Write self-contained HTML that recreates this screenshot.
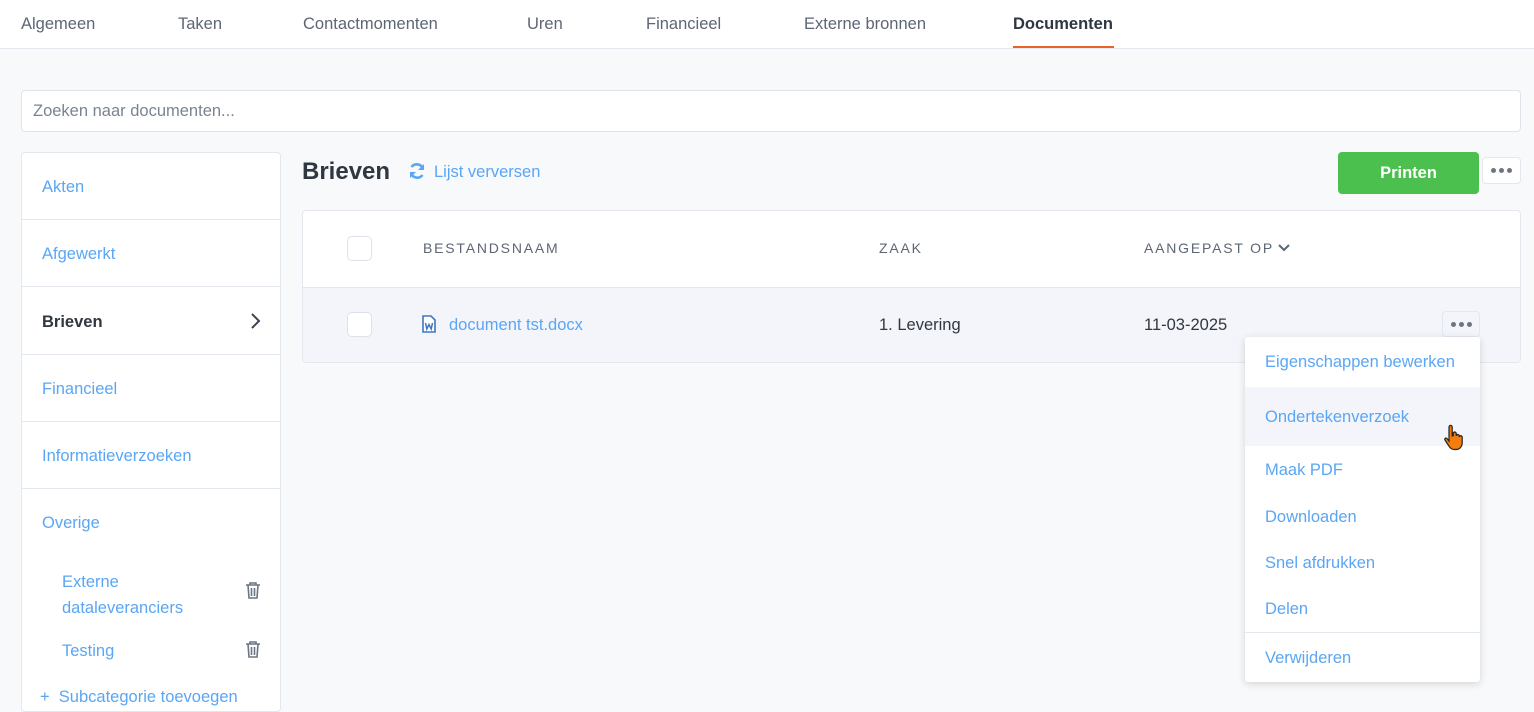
<!DOCTYPE html>
<html><head><meta charset="utf-8"><style>
*{box-sizing:border-box;margin:0;padding:0}
body{width:1534px;height:699px;overflow:hidden;background:#f8f9fb;font-family:"Liberation Sans",sans-serif;position:relative;color:#3a4350}
.a{position:absolute;white-space:nowrap}
.tabs{position:absolute;left:0;top:0;width:1534px;height:49px;background:#fff;border-bottom:1px solid #e4e7ee}
.tab{position:absolute;top:15px;font-size:16.5px;color:#5d6673}
.blue{color:#5aa6f5}
.side{position:absolute;left:21px;top:152px;width:260px;height:560px;background:#fff;border:1px solid #e4e7ee;border-radius:4px}
.si{position:absolute;left:20px;font-size:16.5px;color:#5aa6f5}
.hr{position:absolute;left:0;right:0;height:1px;background:#e4e7ee}
.cb{position:absolute;width:25px;height:25px;border:1px solid #dde1ea;border-radius:5px;background:#fff}
.th{position:absolute;top:240px;font-size:14px;letter-spacing:1.8px;color:#5d6673}
.mi{position:absolute;left:20px;font-size:16.5px;color:#5aa6f5}
.dots{position:absolute;display:flex;gap:3px;justify-content:center;align-items:center}
.dots i{width:5px;height:5px;border-radius:50%;background:#6b7583;display:block}
</style></head><body>
<div class="tabs">
<div class="tab" style="left:21px">Algemeen</div>
<div class="tab" style="left:178px">Taken</div>
<div class="tab" style="left:303px">Contactmomenten</div>
<div class="tab" style="left:527px">Uren</div>
<div class="tab" style="left:646px">Financieel</div>
<div class="tab" style="left:804px">Externe bronnen</div>
<div class="tab" style="left:1013px;font-weight:bold;color:#2f3740">Documenten</div>
<div class="a" style="left:1013px;top:46px;width:101px;height:2px;background:#e8632b"></div>
</div>
<div class="a" style="left:21px;top:90px;width:1500px;height:42px;background:#fff;border:1px solid #dfe3ea;border-radius:4px;font-size:16.5px;color:#7a8491;padding:11px 11px">Zoeken naar documenten...</div>

<div class="side">
<div class="si" style="top:25px">Akten</div><div class="hr" style="top:66px"></div>
<div class="si" style="top:92px">Afgewerkt</div><div class="hr" style="top:133px"></div>
<div class="si" style="top:160px;color:#2f3740;font-weight:bold">Brieven</div>
<svg class="a" style="left:227px;top:159px" width="12" height="18" viewBox="0 0 12 18"><path d="M3 2l7 7-7 7" fill="none" stroke="#3a4350" stroke-width="2"/></svg>
<div class="hr" style="top:201px"></div>
<div class="si" style="top:227px">Financieel</div><div class="hr" style="top:268px"></div>
<div class="si" style="top:294px">Informatieverzoeken</div><div class="hr" style="top:335px"></div>
<div class="si" style="top:361px">Overige</div>
<div class="si" style="left:40px;top:416px;line-height:26px;white-space:normal">Externe<br>dataleveranciers</div>
<div class="si" style="left:40px;top:489px">Testing</div>
<div class="si" style="left:18px;top:535px">+ &nbsp;Subcategorie toevoegen</div>
</div>
<svg class="a" style="left:245px;top:581px" width="16" height="19" viewBox="0 0 16 19"><path d="M1 4h14M5 4V2h6v2M3 4l1 13h8l1-13M6.5 7v8M9.5 7v8" fill="none" stroke="#6b7583" stroke-width="1.6"/></svg>
<svg class="a" style="left:245px;top:640px" width="16" height="19" viewBox="0 0 16 19"><path d="M1 4h14M5 4V2h6v2M3 4l1 13h8l1-13M6.5 7v8M9.5 7v8" fill="none" stroke="#6b7583" stroke-width="1.6"/></svg>

<div class="a" style="left:302px;top:158px;font-size:24px;font-weight:bold;color:#2f3740">Brieven</div>
<svg class="a" style="left:408px;top:162px" width="18" height="18" viewBox="0 0 18 18"><path d="M15 7A6.5 6.5 0 0 0 3.5 5M3 11a6.5 6.5 0 0 0 11.5 2" fill="none" stroke="#5aa6f5" stroke-width="2.6"/><path d="M16 2v6h-6zM2 16v-6h6z" fill="#5aa6f5"/></svg>
<div class="a blue" style="left:434px;top:163px;font-size:16.5px">Lijst verversen</div>
<div class="a" style="left:1338px;top:152px;width:141px;height:42px;background:#4bc04f;border-radius:4px;color:#fff;font-weight:bold;font-size:16.5px;text-align:center;line-height:42px">Printen</div>
<div class="dots" style="left:1482px;top:157px;width:39px;height:27px;background:#fff;border:1px solid #e4e7ee;border-radius:4px"><i></i><i></i><i></i></div>

<div class="a" style="left:302px;top:210px;width:1219px;height:153px;background:#fff;border:1px solid #e4e7ee;border-radius:4px;overflow:hidden">
<div class="a" style="left:0;top:76px;width:100%;height:77px;background:#f3f5fa;border-top:1px solid #e4e7ee"></div>
</div>
<div class="cb" style="left:347px;top:236px"></div>
<div class="cb" style="left:347px;top:312px"></div>
<div class="th" style="left:423px">BESTANDSNAAM</div>
<div class="th" style="left:879px">ZAAK</div>
<div class="th" style="left:1144px">AANGEPAST OP</div>
<svg class="a" style="left:1277px;top:243px" width="14" height="10" viewBox="0 0 14 10"><path d="M2 2l5 5 5-5" fill="none" stroke="#5d6673" stroke-width="2"/></svg>
<svg class="a" style="left:422px;top:315px" width="14" height="18" viewBox="0 0 14 18"><path d="M1 1h8l4 4v12H1z" fill="#fff" stroke="#3e76c2" stroke-width="1.6"/><path d="M3.5 8l1.3 6 2.2-4.5 2.2 4.5 1.3-6" fill="none" stroke="#3e76c2" stroke-width="1.5"/></svg>
<div class="a blue" style="left:449px;top:316px;font-size:16.5px">document tst.docx</div>
<div class="a" style="left:879px;top:316px;font-size:16.5px;color:#2f3740">1. Levering</div>
<div class="a" style="left:1144px;top:316px;font-size:16.5px;color:#2f3740">11-03-2025</div>
<div class="dots" style="left:1442px;top:311px;width:38px;height:26px;background:#f3f5fa;border:1px solid #e4e7ee;border-radius:4px"><i></i><i></i><i></i></div>

<div class="a" style="left:1245px;top:337px;width:235px;height:345px;background:#fff;border-radius:3px;box-shadow:0 2px 8px rgba(0,0,0,.15)">
<div class="mi" style="top:16px">Eigenschappen bewerken</div>
<div class="a" style="left:0;top:50px;width:235px;height:59px;background:#f3f5fa"></div>
<div class="mi" style="top:71px">Ondertekenverzoek</div>
<div class="mi" style="top:124px">Maak PDF</div>
<div class="mi" style="top:171px">Downloaden</div>
<div class="mi" style="top:217px">Snel afdrukken</div>
<div class="mi" style="top:263px">Delen</div>
<div class="hr" style="top:295px"></div>
<div class="mi" style="top:312px">Verwijderen</div>
</div>
<svg class="a" style="left:1443px;top:424px" width="22" height="28" viewBox="0 0 22 28"><path d="M6 3a1.6 1.6 0 0 1 3.2 0v9l1-.2V9.5a1.5 1.5 0 0 1 3 0v2.5a1.5 1.5 0 0 1 3 0v1a1.5 1.5 0 0 1 3 .5v5c0 4-2.5 7-6 7h-2c-3 0-4.5-2-6-4.5L2 16c-.8-1.3.8-2.8 2-1.5L6 17z" fill="#f57c0f" stroke="#222" stroke-width="1.2"/></svg>
</body></html>
